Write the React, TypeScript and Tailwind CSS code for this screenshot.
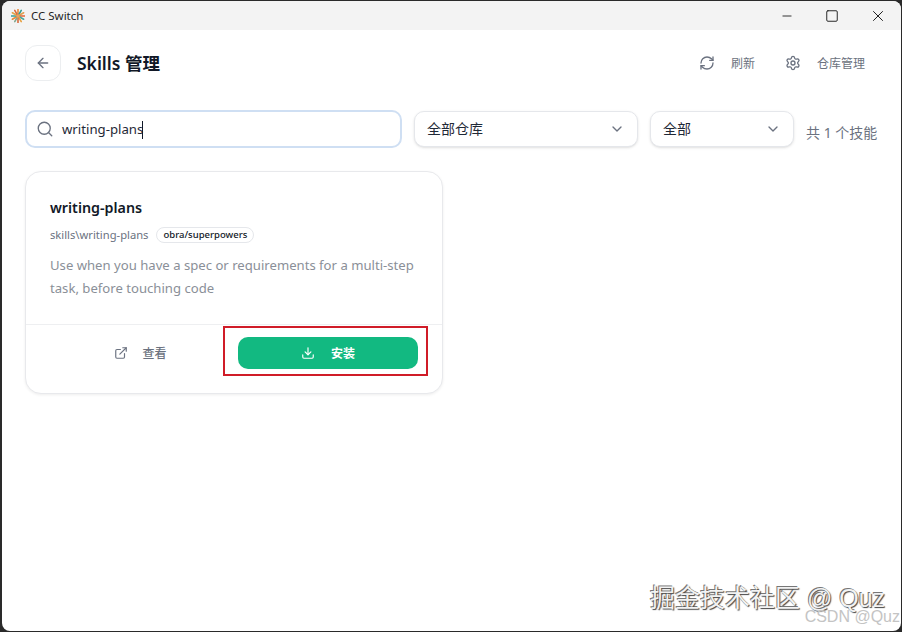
import { ArrowLeft, ChevronDown, Download, ExternalLink, Minus, RefreshCw, Search, Settings, Square, X } from "lucide-react";

const font = "font-['Noto_Sans','Noto_Sans_CJK_SC',sans-serif]";

function Logo() {
  const colors = ["#e8893a", "#2f9e94", "#e0a050", "#e2693a", "#4aa79c", "#e8a03f", "#d9683a", "#7fa88f", "#e8893a", "#3a9f98", "#e5a548", "#d96a3c"];
  return (
    <svg width="14" height="14" viewBox="0 0 14 14" className="shrink-0">
      {colors.map((c, i) => (
        <line key={i} x1="7" y1="7" x2="7" y2="0.5" stroke={c} strokeWidth="1.6" strokeLinecap="round" transform={`rotate(${i * 30} 7 7)`} />
      ))}
      <circle cx="7" cy="7" r="1.8" fill="#e8a060" />
    </svg>
  );
}

function TitleBar() {
  return (
    <div className="h-[29px] shrink-0 bg-[#f3f3f3] flex items-center justify-between">
      <div className="flex items-center gap-[6px] pl-[9px] text-[11.5px] text-[#1f1f1f]">
        <Logo />
        <span>CC Switch</span>
      </div>
      <div className="flex items-center pr-[14px] text-[#1a1a1a]">
        <Minus className="h-[14px] w-[14px]" strokeWidth={1.5} />
        <Square className="ml-[31px] h-[14px] w-[14px]" strokeWidth={1.6} />
        <X className="ml-[30px] h-[18px] w-[18px]" strokeWidth={1.3} />
      </div>
    </div>
  );
}

function Select({ label, width }: { label: string; width: string }) {
  return (
    <div className={`${width} h-[36px] shrink-0 flex items-center justify-between pl-[12px] pr-[12px] pb-[1px] bg-white border border-[#e5e7eb] rounded-[10px] shadow-sm text-[14px] text-[#1f2937]`}>
      <span className="leading-[20px]">{label}</span>
      <ChevronDown className="h-4 w-4 text-[#6b7280]" />
    </div>
  );
}

export default function App() {
  return (
    <div className={`${font} relative w-[902px] h-[632px] bg-[#2a2a2a] p-[1px] pl-[2px] overflow-hidden`}>
      <div className="h-full flex flex-col bg-white rounded-[8px] overflow-hidden">
        <TitleBar />

        <header className="flex items-center justify-between pl-[23px] pr-[36px] pt-[15px]">
          <div className="flex items-center gap-4">
            <div className="h-[36px] w-[36px] flex items-center justify-center border border-[#eceef0] rounded-[12px]">
              <ArrowLeft className="h-4 w-4 text-[#6b7280]" />
            </div>
            <h1 className="text-[17.5px] font-semibold text-[#111827]">Skills 管理</h1>
          </div>
          <div className="flex items-center gap-[30px] text-[12px] text-[#6b7280]">
            <div className="flex items-center gap-[16px]">
              <RefreshCw className="h-4 w-4" />
              <span className="pt-[2px]">刷新</span>
            </div>
            <div className="flex items-center gap-[16px]">
              <Settings className="h-4 w-4" />
              <span className="pt-[2px]">仓库管理</span>
            </div>
          </div>
        </header>

        <div className="flex items-center gap-3 pl-[23px] pt-[29px]">
          <div className="w-[377px] h-[38px] shrink-0 flex items-center gap-[8px] pl-[9px] border-2 border-[#cfdff3] rounded-[10px] text-[13.2px] text-[#1f2937]">
            <Search className="h-[18px] w-[18px] text-[#6b7280]" strokeWidth={1.8} />
            <span className="flex items-center pt-[2px]">
              writing-plans<span className="ml-[-1px] h-[18px] w-[1px] bg-[#111827]" />
            </span>
          </div>
          <Select label="全部仓库" width="w-[224px]" />
          <Select label="全部" width="w-[144px]" />
          <span className="text-[14px] text-[#6b7280] pt-[6px]">共 1 个技能</span>
        </div>

        <section className="mt-[23px] ml-[23px] w-[418px] h-[223px] flex flex-col bg-white border border-[#e8e9ec] rounded-[16px] shadow-[0_1px_3px_rgba(0,0,0,0.07)]">
          <div className="flex-1 px-[24px] pt-[23px]">
            <h2 className="text-[14.3px] leading-[26px] font-semibold text-[#111827]">writing-plans</h2>
            <div className="flex items-center gap-2 mt-[6px]">
              <span className="text-[11.2px] text-[#6b7280]">skills\writing-plans</span>
              <span className="h-[16px] flex items-center px-[6px] border border-[#e5e7eb] rounded-full text-[9.5px] font-medium text-[#111827]">obra/superpowers</span>
            </div>
            <p className="mt-[10px] text-[13.13px] leading-[23px] text-[#8a8f98]">Use when you have a spec or requirements for a multi-step task, before touching code</p>
          </div>
          <div className="h-[69px] shrink-0 flex items-center px-[12px] pb-[12px] border-t border-[#eeeff1]">
            <div className="w-[200px] pl-[5px] flex items-center justify-center gap-[14px] text-[12px] font-medium text-[#6b7280]">
              <ExternalLink className="h-[14px] w-[14px]" />
              <span className="pt-[2px]">查看</span>
            </div>
            <div className="w-[180px] h-[32px] flex items-center justify-center gap-[16px] rounded-[10px] bg-[#12b981] text-[12px] font-semibold text-white">
              <Download className="h-[14px] w-[14px]" />
              <span className="pt-[2px]">安装</span>
            </div>
          </div>
        </section>
      </div>

      {/* annotation and watermarks pasted over the shot */}
      <div className="absolute left-[223px] top-[326px] w-[205px] h-[50px] border-2 border-[#d01c28]" />
      <div className="absolute left-[650px] top-[582px] font-['Liberation_Sans','Noto_Sans_CJK_SC',sans-serif] text-[25px] leading-[32px] text-[#f2f2f2] [text-shadow:1px_1px_1px_#444,-1px_-1px_0_#777]">掘金技术社区 @ Quz</div>
      <div className="absolute right-[2px] top-[607px] font-['Liberation_Sans',sans-serif] text-[16px] leading-[20px] text-[#c4c4c4]">CSDN @Quz</div>
    </div>
  );
}
